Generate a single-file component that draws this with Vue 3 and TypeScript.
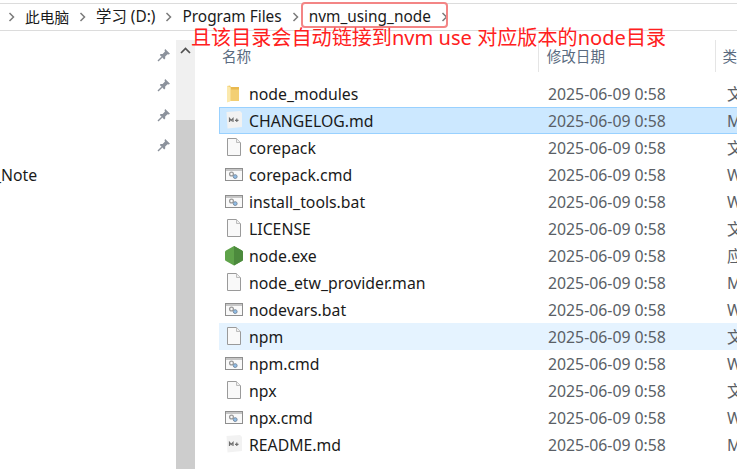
<script setup lang="ts">
type Kind = 'folder' | 'md' | 'file' | 'cmd' | 'node'
interface Row { name: string; kind: Kind; type: string; state?: string }
const crumbs = ['此电脑', '学习 (D:)', 'Program Files', 'nvm_using_node']
const rows: Row[] = [
  { name: 'node_modules', kind: 'folder', type: '文' },
  { name: 'CHANGELOG.md', kind: 'md', type: 'M', state: 'selected' },
  { name: 'corepack', kind: 'file', type: '文' },
  { name: 'corepack.cmd', kind: 'cmd', type: 'W' },
  { name: 'install_tools.bat', kind: 'cmd', type: 'W' },
  { name: 'LICENSE', kind: 'file', type: '文' },
  { name: 'node.exe', kind: 'node', type: '应' },
  { name: 'node_etw_provider.man', kind: 'file', type: 'M' },
  { name: 'nodevars.bat', kind: 'cmd', type: 'W' },
  { name: 'npm', kind: 'file', type: '文', state: 'hover' },
  { name: 'npm.cmd', kind: 'cmd', type: 'W' },
  { name: 'npx', kind: 'file', type: '文' },
  { name: 'npx.cmd', kind: 'cmd', type: 'W' },
  { name: 'README.md', kind: 'md', type: 'M' },
]
const pins = [0, 1, 2, 3]
</script>

<template>
  <div class="win">
    <nav class="crumbs">
      <template v-for="c in crumbs" :key="c">
        <svg class="chev" width="7" height="10" viewBox="0 0 7 10"><path d="M1.5 1 L5.5 5 L1.5 9" fill="none" stroke="#7a7a7a" stroke-width="1.5" /></svg>
        <span class="crumb">{{ c }}</span>
      </template>
      <svg class="chev" width="7" height="10" viewBox="0 0 7 10"><path d="M1.5 1 L5.5 5 L1.5 9" fill="none" stroke="#7a7a7a" stroke-width="1.5" /></svg>
    </nav>

    <div class="main">
      <aside class="side">
        <div class="pins">
          <svg v-for="p in pins" :key="p" width="14" height="14" viewBox="0 0 14 14">
            <path d="M8.2 1 L13 5.8 L11.8 6.6 L10.6 6.2 L8.2 8.6 L8.2 10.6 L7.2 11.4 L2.8 7 L3.6 6 L5.6 6 L8 3.6 L7.5 2.2 Z" fill="#8c929c" />
            <path d="M4.8 9.2 L1 13" stroke="#8c929c" stroke-width="1.4" />
          </svg>
        </div>
        <div class="note">_Note</div>
      </aside>

      <div class="scroll">
        <svg class="up" width="11" height="7" viewBox="0 0 11 7"><path d="M1 6 L5.5 1.5 L10 6" fill="none" stroke="#505050" stroke-width="1.7" /></svg>
        <div class="thumb"></div>
      </div>

      <section class="list">
        <header class="head">
          <div class="h name">名称</div>
          <div class="h date">修改日期</div>
          <div class="h type">类</div>
        </header>
        <div v-for="r in rows" :key="r.name" class="row" :class="r.state">
          <span class="ico">
            <svg v-if="r.kind === 'folder'" width="20" height="20" viewBox="0 0 20 20">
              <path d="M2 2 L5 1.5 L6 3 L14 3 L14 17 L5.5 17 L2 18 Z" fill="#f3cf73" />
              <path d="M2 2 L5.5 3.5 L5.5 17 L2 18.5 Z" fill="#fbe9ad" />
              <path d="M6 3 L14 3 L14 5.5 L6 5.5 Z" fill="#e9b94f" />
            </svg>
            <svg v-else-if="r.kind === 'md'" width="20" height="20" viewBox="0 0 20 20">
              <path d="M1.5 1 L15 0 L17 2 L17 16 L2.5 17.5 Z" fill="#f2f2f2" />
              <path d="M4.5 11 L4.5 7.5 L6.2 9.5 L8 7.5 L8 11 M10 9.3 L13.5 9.3 M11.8 7.5 L11.8 11" fill="none" stroke="#6f6f6f" stroke-width="1.2" />
            </svg>
            <svg v-else-if="r.kind === 'file'" width="20" height="20" viewBox="0 0 20 20">
              <path d="M2.5 .5 L11.5 .5 L15.5 4.5 L15.5 17.5 L2.5 17.5 Z" fill="#f9f9f9" stroke="#9a9a9a" />
              <path d="M11.5 .5 L11.5 4.5 L15.5 4.5" fill="#efefef" stroke="#bdbdbd" />
            </svg>
            <svg v-else-if="r.kind === 'cmd'" width="20" height="20" viewBox="0 0 20 20">
              <rect x=".5" y="3.5" width="17" height="12" fill="#f9f9f9" stroke="#8e8e8e" />
              <rect x="1" y="4" width="16" height="2" fill="#c6c6c6" />
              <circle cx="6.5" cy="9" r="1.9" fill="none" stroke="#9a9a9a" stroke-width="1.3" />
              <circle cx="10.2" cy="11.6" r="1.9" fill="#8ebde8" stroke="#7b8da0" stroke-width="1" />
            </svg>
            <svg v-else width="20" height="20" viewBox="0 0 20 20">
              <path d="M9 0 L17 4.5 Q18 5 18 6 L18 13.5 Q18 14.5 17 15 L9 19.5 L1 15 Q0 14.5 0 13.5 L0 6 Q0 5 1 4.5 Z" fill="#5fa34a" />
              <path d="M9 0 L17 4.5 Q18 5 18 6 L18 13.5 Q18 14.5 17 15 L9 19.5 Z" fill="#4c8a3d" />
            </svg>
          </span>
          <span class="fname">{{ r.name }}</span>
          <span class="fdate">2025-06-09 0:58</span>
          <span class="ftype">{{ r.type }}</span>
        </div>
      </section>
    </div>

    <div class="redbox"></div>
    <div class="anno">且该目录会自动链接到nvm use 对应版本的node目录</div>
  </div>
</template>

<style scoped>
.win {
  position: relative;
  width: 737px;
  height: 469px;
  overflow: hidden;
  background: #fff;
  font-family: "Noto Sans", "Noto Sans CJK SC", sans-serif;
  font-size: 15.8px;
  color: #1a1a1a;
}
.crumbs {
  box-sizing: border-box;
  height: 28px;
  margin-top: 3px;
  border-top: 1px solid #dcdcdc;
  border-bottom: 1px solid #dcdcdc;
  display: flex;
  align-items: center;
  padding-left: 8px;
  gap: 10px;
  white-space: nowrap;
  font-size: 15.4px;
}
.crumb { line-height: 24px; }
.crumb:first-of-type { font-size: 14.7px; }
.chev { flex: none; }
.main { display: flex; height: 438px; }
.side {
  width: 176px;
  flex: none;
  position: relative;
}
.pins {
  padding-top: 17px;
  padding-left: 157px;
  display: flex;
  flex-direction: column;
  gap: 16px;
}
.pins svg { display: block; }
.note {
  position: absolute;
  left: -6px;
  top: 133px;
  line-height: 22px;
}
.scroll {
  width: 19px;
  flex: none;
  margin-top: 9px;
  background: #f0f0f0;
  position: relative;
}
.up { position: absolute; left: 4px; top: 7px; }
.thumb {
  position: absolute;
  left: 0;
  right: 0;
  top: 80px;
  bottom: 0;
  background: #cdcdcd;
}
.list { flex: 1; min-width: 0; margin-left: 24px; }
.head {
  display: flex;
  height: 49px;
  padding-top: 9px;
  box-sizing: border-box;
  color: #5a6b80;
  font-size: 14.6px;
}
.h { height: 32px; line-height: 32px; }
.name { width: 321px; padding-left: 3px; box-sizing: border-box; }
.date { width: 180px; padding-left: 8px; box-sizing: border-box; border-left: 1px solid #e5e5e5; border-right: 1px solid #e5e5e5; }
.type { padding-left: 6px; }
.row {
  box-sizing: border-box;
  height: 27px;
  display: flex;
  align-items: center;
  border: 1px solid transparent;
  border-right: 0;
  white-space: nowrap;
}
.row.selected { background: #cce8ff; border-color: #99d1ff; }
.row.hover { background: #e5f3ff; border-color: #e5f3ff; }
.ico { width: 29px; flex: none; padding-left: 5px; box-sizing: border-box; display: flex; }
.fname { width: 299px; flex: none; }
.fdate { width: 179px; flex: none; color: #5a5f66; }
.ftype { color: #5a5f66; }
.redbox {
  position: absolute;
  left: 301px;
  top: 2px;
  width: 147px;
  height: 26px;
  box-sizing: border-box;
  border: 2px solid #f38585;
  border-radius: 4px;
}
.anno {
  position: absolute;
  left: 191px;
  top: 23px;
  color: #ff2020;
  font-size: 20.1px;
  line-height: 30px;
  white-space: nowrap;
}
</style>
